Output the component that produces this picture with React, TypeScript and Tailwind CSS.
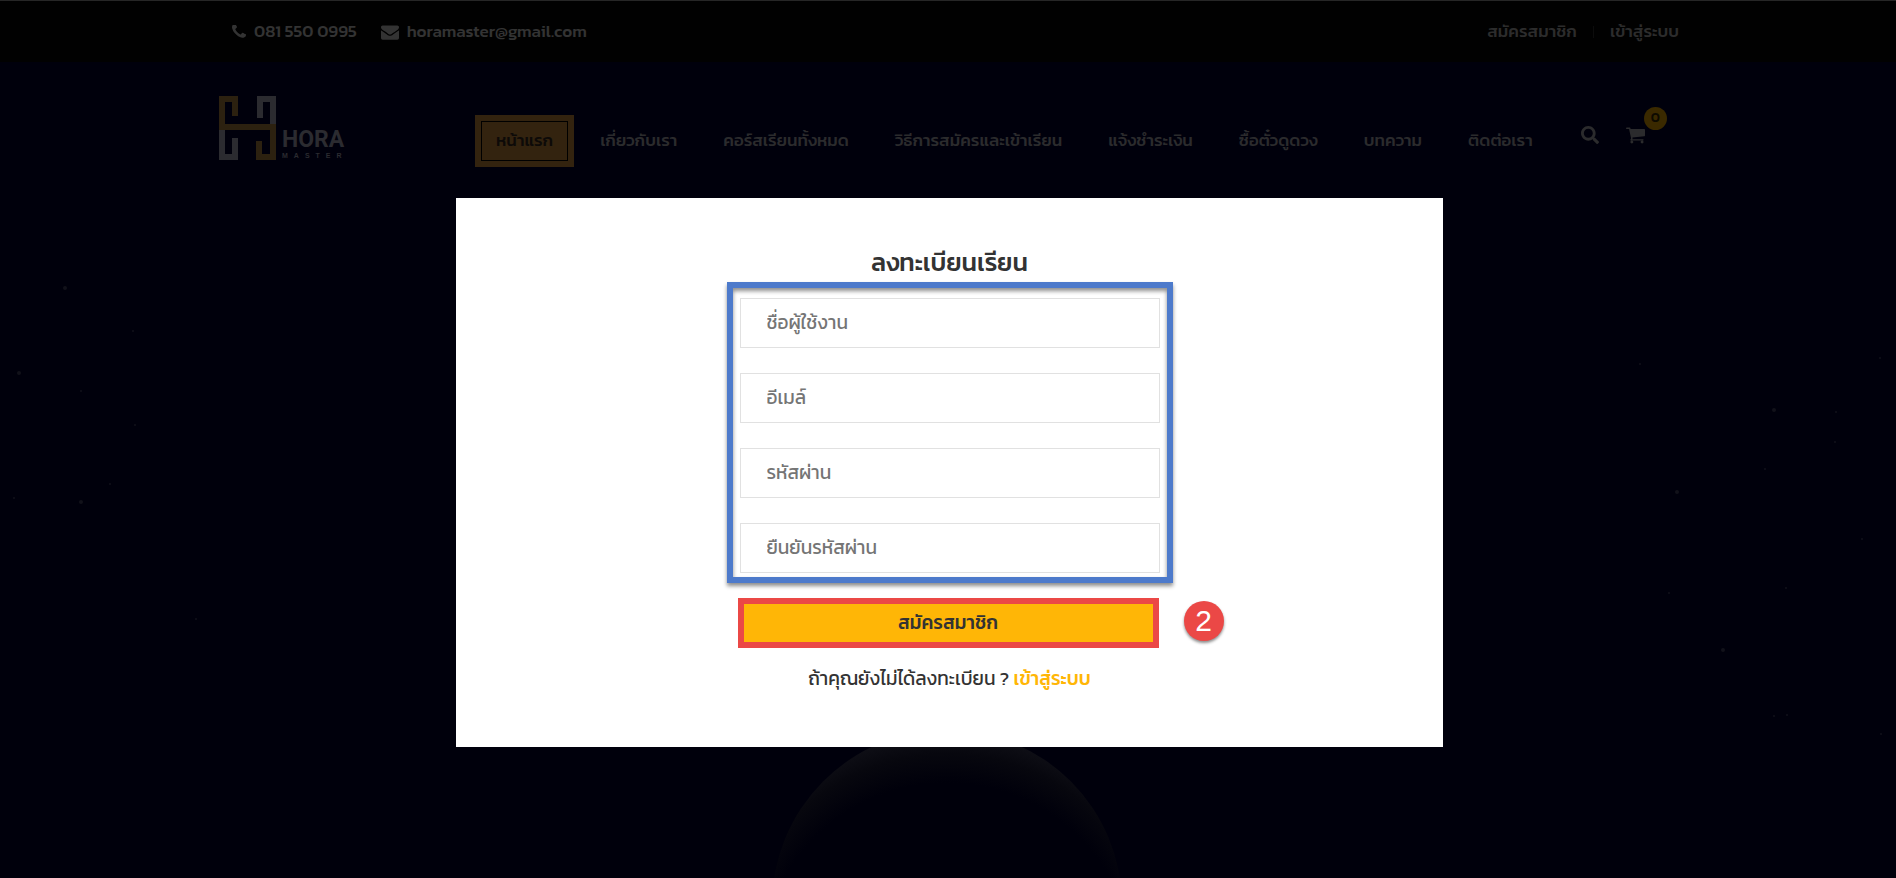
import { FaSearch } from "react-icons/fa";

const navItems = [
  "เกี่ยวกับเรา",
  "คอร์สเรียนทั้งหมด",
  "วิธีการสมัครและเข้าเรียน",
  "แจ้งชำระเงิน",
  "ซื้อตั๋วดูดวง",
  "บทความ",
  "ติดต่อเรา",
];

const fields = [
  { id: "username", type: "text", label: "ชื่อผู้ใช้งาน" },
  { id: "email", type: "email", label: "อีเมล์" },
  { id: "password", type: "password", label: "รหัสผ่าน" },
  { id: "confirm", type: "password", label: "ยืนยันรหัสผ่าน" },
];

// x, y, radius
const stars = [
  [65, 288, 2],
  [133, 331, 1],
  [19, 373, 2],
  [81, 391, 1],
  [135, 425, 1],
  [110, 484, 1],
  [14, 498, 1],
  [81, 502, 2],
  [196, 619, 1],
  [1640, 364, 1],
  [1880, 358, 1],
  [1774, 410, 2],
  [1836, 412, 1],
  [1835, 442, 1],
  [1765, 469, 1],
  [1677, 492, 2],
  [1862, 539, 1],
  [1786, 588, 1],
  [1669, 593, 1],
  [1723, 650, 2],
  [1774, 716, 1],
  [1787, 715, 1],
  [1881, 734, 1],
];

function NightSky() {
  return (
    <svg
      viewBox="0 0 1896 878"
      preserveAspectRatio="xMidYMin slice"
      className="absolute inset-0 h-full w-full"
      aria-hidden="true"
    >
      <defs>
        <radialGradient id="moon" gradientUnits="userSpaceOnUse" cx="947" cy="970" r="240">
          <stop offset="0.78" stopColor="#00000b" />
          <stop offset="0.9" stopColor="#07070e" />
          <stop offset="1" stopColor="#101017" />
        </radialGradient>
      </defs>
      {stars.map(([x, y, r]) => (
        <circle key={`${x}-${y}`} cx={x} cy={y} r={r} fill="#11111a" />
      ))}
      <circle cx="947" cy="905" r="175" fill="url(#moon)" />
    </svg>
  );
}

function PhoneIcon() {
  return (
    <svg viewBox="192 256 1408 1408" className="size-3.5" fill="currentColor" aria-hidden="true">
      <path d="M1600 1240q0 27-10 70.5t-21 68.5q-21 50-122 106-94 51-186 51-27 0-53-3.5t-57.5-12.5-47-14.5-55.5-20.5-49-18q-98-35-175-83-127-79-264-216t-216-264q-48-77-83-175-3-9-18-49t-20.5-55.5-14.5-47-12.5-57.5-3.5-53q0-92 51-186 56-101 106-122 25-11 68.5-21t70.5-10q14 0 21 3 18 6 53 76 11 19 30 54t35 63.5 31 53.5q3 4 17.5 25t21.5 35.5 7 28.5q0 20-28.5 50t-62 55-62 53-28.5 46q0 9 5 22.5t8.5 20.5 14 24 11.5 19q76 137 174 235t235 174q2 1 19 11.5t24 14 20.5 8.5 22.5 5q18 0 46-28.5t53-62 55-62 50-28.5q14 0 28.5 7t35.5 21.5 25 17.5q25 15 53.5 31t63.5 35 54 30q70 35 76 53 3 7 3 21z" />
    </svg>
  );
}

function MailIcon() {
  return (
    <svg viewBox="0 0 1792 1792" className="size-[18px]" fill="currentColor" aria-hidden="true">
      <path d="M1792 710v794q0 66-47 113t-113 47h-1472q-66 0-113-47t-47-113v-794q44 49 101 87 362 246 497 345 57 42 92.5 65.5t94.5 48 110 24.5h2q51 0 110-24.5t94.5-48 92.5-65.5q170-123 498-345 57-39 100-87zm0-294q0 79-49 151t-122 123q-376 261-468 325-10 7-42.5 31t-54 38.5-52 32.5-57.5 27-50 9h-2q-23 0-50-9t-57.5-27-52-32.5-54-38.5-42.5-31q-91-64-262-182.5t-205-142.5q-62-42-117-115.5t-55-136.5q0-78 41.5-130t118.5-52h1472q65 0 112.5 47t47.5 113z" />
    </svg>
  );
}

function CartIcon() {
  return (
    <svg viewBox="0 128 1664 1664" className="size-[19px]" fill="currentColor" aria-hidden="true">
      <path d="M640 1536q0 52-38 90t-90 38-90-38-38-90 38-90 90-38 90 38 38 90zm896 0q0 52-38 90t-90 38-90-38-38-90 38-90 90-38 90 38 38 90zm128-1088v512q0 24-16.5 42.5t-40.5 21.5l-1044 122q13 60 13 70 0 16-24 64h920q26 0 45 19t19 45-19 45-45 19h-1024q-26 0-45-19t-19-45q0-11 8-31.5t16-36 21.5-40 15.5-29.5l-177-823h-204q-26 0-45-19t-19-45 19-45 45-19h256q16 0 28.5 6.5t19.5 15.5 13 24.5 8 26 5.5 29.5 4.5 26h1201q26 0 45 19t19 45z" />
    </svg>
  );
}

function Logo() {
  return (
    <a href="#" className="flex w-[125px] items-end gap-1.5">
      <svg viewBox="0 0 57 64" className="h-16 w-[57px] shrink-0" fill="none" strokeWidth="6" aria-hidden="true">
        <path d="M16 20V3H3v31" stroke="#2c2110" />
        <path d="M41 22V3h13v28" stroke="#2b2b30" />
        <path d="M3 34v27h13V42" stroke="#2b2b30" />
        <path d="M0 31h54v30H40V45" stroke="#2c2110" />
      </svg>
      <span className="flex flex-col font-['Roboto',sans-serif] text-[#2b2b30]">
        <span className="text-[23px] leading-6 font-bold">HORA</span>
        <span className="font-['Liberation_Sans',sans-serif] text-[7px] leading-2 font-bold tracking-[6px]">MASTER</span>
      </span>
    </a>
  );
}

function TopBar() {
  return (
    <div className="relative h-[62px] border-t border-[#262626] bg-[#010101] text-[#333]">
      <div className="mx-auto flex h-full max-w-[1470px] items-center justify-between pr-1 pl-[19px] text-[17px] font-medium">
        <div className="flex items-center gap-6">
          <a href="#" className="flex items-center gap-2">
            <PhoneIcon />
            081 550 0995
          </a>
          <a href="#" className="flex items-center gap-2">
            <MailIcon />
            horamaster@gmail.com
          </a>
        </div>
        <div className="flex items-center gap-4 text-[#2c2c2c]">
          <a href="#">สมัครสมาชิก</a>
          <span className="h-3 w-px bg-[#0c0c0c]" />
          <a href="#">เข้าสู่ระบบ</a>
        </div>
      </div>
    </div>
  );
}

function Header() {
  return (
    <header className="relative mx-auto flex max-w-[1470px] items-start gap-[131px] pt-[34px] pl-1.5">
      <Logo />
      <div className="flex items-center pt-[19px] text-[17px] font-medium text-[#2b2b2d]">
        <a href="#" className="mr-[26px] bg-[#33230f] p-1.5 text-[#0d0a08]">
          <span className="flex h-10 items-center border border-black px-3.5 whitespace-nowrap">หน้าแรก</span>
        </a>
        <nav className="flex gap-[46px]">
          {navItems.map((item) => (
            <a key={item} href="#" className="whitespace-nowrap">
              {item}
            </a>
          ))}
        </nav>
        <div className="mb-3 ml-12 flex items-center gap-[27px]">
          <button type="button" aria-label="ค้นหา">
            <FaSearch className="size-[18px]" />
          </button>
          <a href="#" className="relative" aria-label="ตะกร้า">
            <CartIcon />
            <span className="absolute -top-[19px] left-[18px] flex size-[23px] items-center justify-center rounded-full bg-[#3a2900] text-sm text-[#0d0a00]">
              0
            </span>
          </a>
        </div>
      </div>
    </header>
  );
}

function RegisterForm() {
  return (
    <form className="mx-auto flex w-[446px] flex-col text-[19px] text-[#333]">
      <h2 className="text-center text-[25px] leading-10 font-medium">ลงทะเบียนเรียน</h2>
      <div className="flex flex-col gap-[25px] border-6 border-[#4d7acb] px-[7px] pt-2.5 pb-1 shadow-[0_3px_4px_rgba(0,0,0,0.45),inset_0_3px_4px_rgba(0,0,0,0.45)]">
        {fields.map((f) => (
          <input
            key={f.id}
            id={f.id}
            type={f.type}
            placeholder={f.label}
            aria-label={f.label}
            className="h-[50px] border border-[#e1e1e1] px-[26px] pb-0.5 placeholder:text-[#757575]"
          />
        ))}
      </div>
      <div className="relative mt-[15px] mr-3.5 ml-[11px]">
        <button type="button" className="h-[50px] w-full border-6 border-[#eb4846] bg-[#ffb606] font-medium">
          สมัครสมาชิก
        </button>
        <span className="absolute top-[3px] left-full ml-[25px] flex size-10 items-center justify-center rounded-full bg-[#eb4846] font-['Liberation_Sans',sans-serif] text-3xl text-white shadow-[0_2px_3px_rgba(0,0,0,0.45)]">
          2
        </span>
      </div>
      <p className="mt-[19px] text-center leading-6">
        ถ้าคุณยังไม่ได้ลงทะเบียน ?{" "}
        <a href="#" className="font-medium text-[#ffb606]">
          เข้าสู่ระบบ
        </a>
      </p>
    </form>
  );
}

export default function App() {
  return (
    <div className="relative min-h-screen bg-[#00000c] font-[Kanit,'Noto_Sans_Thai','Noto_Sans',sans-serif]">
      <NightSky />
      <TopBar />
      <Header />
      <div className="relative pt-[31px] pl-[3px]">
        <main className="mx-auto max-w-[987px] bg-white pt-11 pb-14">
          <RegisterForm />
        </main>
      </div>
    </div>
  );
}
